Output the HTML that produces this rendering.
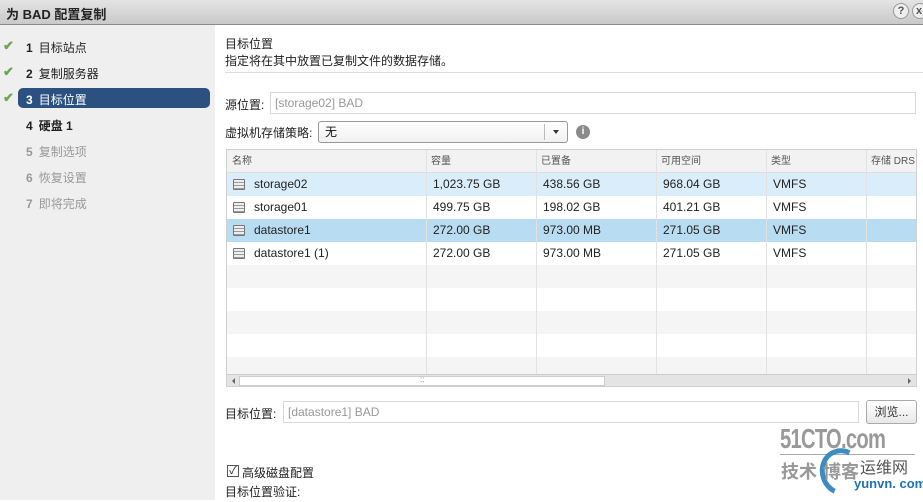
<!DOCTYPE html>
<html><head><meta charset="utf-8"><style>
*{margin:0;padding:0;box-sizing:border-box}
body{width:923px;height:500px;overflow:hidden;position:relative;background:#fff;font-family:"Liberation Sans","Noto Sans CJK SC",sans-serif;font-size:12px;color:#333}
.a{position:absolute;white-space:nowrap}
#title{left:0;top:0;width:923px;height:25px;background:linear-gradient(#e4e4e4,#c9c9c9);border-bottom:1px solid #8a8a8a}
#left{left:0;top:25px;width:215px;height:475px;background:#efefef}
.step{left:26px;font-size:12px;color:#222}
.step b{font-weight:bold;margin-right:6px}
.gray{color:#999}
.chk{left:3px;color:#6aa84f;font-size:13px;font-weight:bold}
.field{border:1px solid #d8d8d8;background:#fff;color:#999;padding-left:4px;line-height:20px}
.cell{position:absolute;top:0;line-height:23px;font-size:12px;color:#222}
.row{position:absolute;left:0;width:690px;height:23px}
.ic{position:absolute;left:6px;top:6px;width:12px;height:11px;border:1px solid #777;background:repeating-linear-gradient(#eee 0 2px,#999 2px 3px);border-radius:1px}
.vl{position:absolute;top:0;width:1px;height:224px;background:#e2e2e2}
</style></head><body>
<div id="title" class="a"></div>
<div class="a" style="left:6px;top:4px;font-size:13px;font-weight:bold;color:#222">为 BAD 配置复制</div>
<div class="a" style="left:893px;top:3px;width:16px;height:16px;border-radius:50%;border:1px solid #999;background:#eee;font-size:11px;font-weight:bold;text-align:center;line-height:14px;color:#555">?</div>
<div class="a" style="left:912px;top:3px;width:16px;height:16px;border-radius:50%;border:1px solid #999;background:#eee;font-size:11px;font-weight:bold;line-height:14px;padding-left:3px;color:#555">x</div>

<div id="left" class="a"></div>
<div class="a chk" style="top:38px">✔</div>
<div class="a chk" style="top:64px">✔</div>
<div class="a chk" style="top:90px">✔</div>
<div class="a" style="left:18px;top:88px;width:192px;height:20px;background:#2b5180;border-radius:5px"></div>
<div class="a step" style="top:39px"><b>1</b>目标站点</div>
<div class="a step" style="top:65px"><b>2</b>复制服务器</div>
<div class="a step" style="top:91px;color:#fff"><b>3</b>目标位置</div>
<div class="a step" style="top:117px"><b>4</b><b style="margin:0">硬盘 1</b></div>
<div class="a step gray" style="top:143px"><b>5</b>复制选项</div>
<div class="a step gray" style="top:169px"><b>6</b>恢复设置</div>
<div class="a step gray" style="top:195px"><b>7</b>即将完成</div>

<div class="a" style="left:225px;top:35px;font-size:12px;color:#222">目标位置</div>
<div class="a" style="left:225px;top:52px;font-size:12px;color:#222">指定将在其中放置已复制文件的数据存储。</div>
<div class="a" style="left:225px;top:72px;width:698px;height:1px;background:#ddd"></div>

<div class="a" style="left:225px;top:96px;color:#222">源位置:</div>
<div class="a field" style="left:270px;top:92px;width:646px;height:22px">[storage02] BAD</div>
<div class="a" style="left:225px;top:124px;color:#222">虚拟机存储策略:</div>
<div class="a" style="left:318px;top:121px;width:250px;height:22px;border:1px solid #999;border-radius:3px;background:linear-gradient(#fff,#f1f1f1);padding-left:6px;line-height:20px;color:#111">无</div>
<div class="a" style="left:544px;top:124px;width:1px;height:16px;background:#bbb"></div>
<div class="a" style="left:553px;top:130px;width:0;height:0;border-left:3px solid transparent;border-right:3px solid transparent;border-top:4px solid #333"></div>
<div class="a" style="left:576px;top:125px;width:14px;height:14px;border-radius:50%;background:#8a8a8a;color:#fff;font-size:10px;font-weight:bold;text-align:center;line-height:14px">i</div>

<div class="a" style="left:226px;top:149px;width:691px;height:238px;border:1px solid #d0d0d0;overflow:hidden;background:#fff">
 <div class="row" style="top:0;background:#f2f2f2;border-bottom:1px solid #ddd"></div>
 <div class="row" style="top:23px;background:#d9eefa"></div>
 <div class="row" style="top:46px;background:#fff"></div>
 <div class="row" style="top:69px;background:#b8dcf2"></div>
 <div class="row" style="top:92px;background:#fff"></div>
 <div class="row" style="top:115px;background:#f5f5f5"></div>
 <div class="row" style="top:138px;background:#fff"></div>
 <div class="row" style="top:161px;background:#f5f5f5"></div>
 <div class="row" style="top:184px;background:#fff"></div>
 <div class="row" style="top:207px;background:#f5f5f5"></div>
 <div class="vl" style="left:199px"></div><div class="vl" style="left:309px"></div><div class="vl" style="left:429px"></div><div class="vl" style="left:539px"></div><div class="vl" style="left:639px"></div>
 <div class="row" style="top:0">
  <div class="cell" style="left:5px;font-size:10px;color:#555">名称</div><div class="cell" style="left:204px;font-size:10px;color:#555">容量</div><div class="cell" style="left:314px;font-size:10px;color:#555">已置备</div><div class="cell" style="left:434px;font-size:10px;color:#555">可用空间</div><div class="cell" style="left:544px;font-size:10px;color:#555">类型</div><div class="cell" style="left:644px;font-size:10px;color:#555">存储 DRS</div>
 </div>
 <div class="row" style="top:23px"><div class="ic"></div><div class="cell" style="left:27px">storage02</div><div class="cell" style="left:206px">1,023.75 GB</div><div class="cell" style="left:316px">438.56 GB</div><div class="cell" style="left:436px">968.04 GB</div><div class="cell" style="left:546px">VMFS</div></div>
 <div class="row" style="top:46px"><div class="ic"></div><div class="cell" style="left:27px">storage01</div><div class="cell" style="left:206px">499.75 GB</div><div class="cell" style="left:316px">198.02 GB</div><div class="cell" style="left:436px">401.21 GB</div><div class="cell" style="left:546px">VMFS</div></div>
 <div class="row" style="top:69px"><div class="ic"></div><div class="cell" style="left:27px">datastore1</div><div class="cell" style="left:206px">272.00 GB</div><div class="cell" style="left:316px">973.00 MB</div><div class="cell" style="left:436px">271.05 GB</div><div class="cell" style="left:546px">VMFS</div></div>
 <div class="row" style="top:92px"><div class="ic"></div><div class="cell" style="left:27px">datastore1 (1)</div><div class="cell" style="left:206px">272.00 GB</div><div class="cell" style="left:316px">973.00 MB</div><div class="cell" style="left:436px">271.05 GB</div><div class="cell" style="left:546px">VMFS</div></div>
 <div style="position:absolute;left:0;top:224px;width:691px;height:13px;background:#e4e4e4;border-top:1px solid #ccc">
  <div style="position:absolute;left:12px;top:1px;width:366px;height:10px;background:#fff;border:1px solid #ccc"></div>
  <div style="position:absolute;left:5px;top:3px;border-top:3px solid transparent;border-bottom:3px solid transparent;border-right:3px solid #666"></div>
  <div style="position:absolute;left:681px;top:3px;border-top:3px solid transparent;border-bottom:3px solid transparent;border-left:3px solid #666"></div>
  <div style="position:absolute;left:193px;top:0px;font-size:8px;color:#888">::</div>
 </div>
</div>

<div class="a" style="left:225px;top:405px;color:#222">目标位置:</div>
<div class="a field" style="left:283px;top:401px;width:576px;height:22px">[datastore1] BAD</div>
<div class="a" style="left:866px;top:400px;width:51px;height:24px;border:1px solid #aaa;border-radius:3px;background:linear-gradient(#fff,#e8e8e8);text-align:center;line-height:22px;color:#333">浏览...</div>

<div class="a" style="left:227px;top:465px;width:12px;height:12px;border:1px solid #555;background:#fff;font-size:11px;line-height:10px;text-align:center;color:#222">✓</div>
<div class="a" style="left:242px;top:464px;color:#222">高级磁盘配置</div>
<div class="a" style="left:225px;top:483px;color:#222">目标位置验证:</div>

<div class="a" style="left:780px;top:423px;font-size:28px;font-weight:bold;color:#999;letter-spacing:-1px;transform:scaleX(.72);transform-origin:left">51CTO.com</div>
<div class="a" style="left:780px;top:454px;width:135px;height:1px;background:#aaa"></div>
<div class="a" style="left:781px;top:458px;font-size:18px;color:#999;font-weight:bold">技术</div>
<div class="a" style="left:820px;top:448px;width:44px;height:48px;border-radius:50%;border:5px solid #3d8cc0;border-right-color:transparent;border-bottom-color:transparent;transform:rotate(-20deg)"></div>
<div class="a" style="left:823px;top:458px;font-size:18px;color:#999;font-weight:bold">博客</div>
<div class="a" style="left:860px;top:454px;font-size:16px;color:#555">运维网</div>
<div class="a" style="left:854px;top:476px;font-size:13px;font-weight:bold;color:#1f73b3">yunvn. com</div>
</body></html>
